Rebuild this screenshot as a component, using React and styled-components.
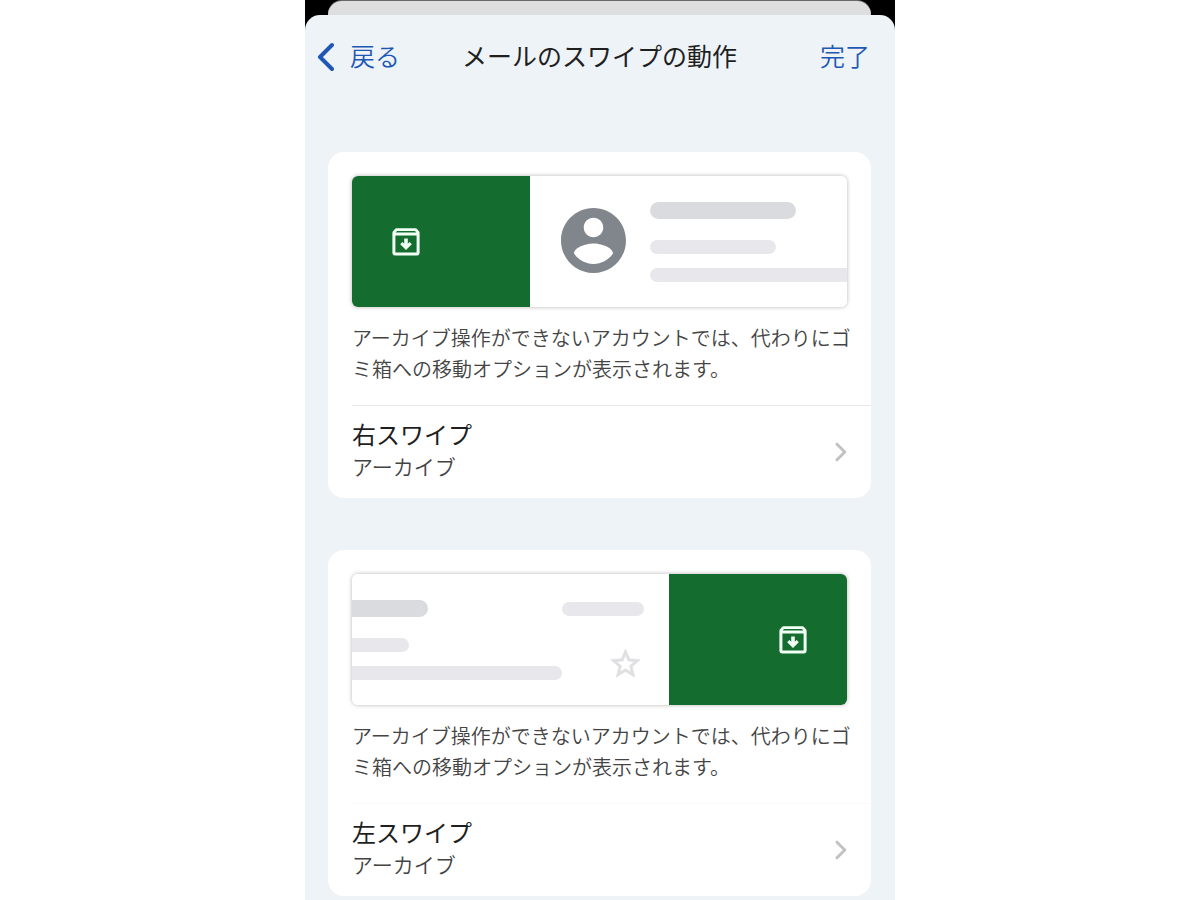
import React from "react";
import styled, { createGlobalStyle } from "styled-components";

const GlobalStyle = createGlobalStyle`
  *, *::before, *::after { box-sizing: border-box; }
  body {
    margin: 0;
    background: #ffffff;
    font-family: "Noto Sans CJK JP", "Noto Sans", sans-serif;
    font-weight: 350;
    color: #1f1f1f;
  }
`;

const Device = styled.div`
  display: flex;
  flex-direction: column;
  width: 100%;
  max-width: 590px;
  min-height: 100vh;
  margin: 0 auto;
  background: #000000;
`;

const SheetBehind = styled.div`
  height: 14px;
  margin: 1px 24px 0 23px;
  border-radius: 14px 14px 0 0;
  background: #dedede;
  box-shadow: 0 -1px 0 #6a6668;
`;

const Sheet = styled.div`
  flex: 1;
  padding-bottom: 4px;
  border-radius: 15px 15px 0 0;
  background: #eef3f8;
`;

const Header = styled.header`
  display: grid;
  grid-template-columns: 1fr auto 1fr;
  align-items: center;
  height: 84px;
  padding: 0 25px 0 12px;
`;

const Title = styled.h1`
  margin: 0 0 4px 12px;
  font-size: 25px;
  line-height: 36px;
  font-weight: 400;
`;

const NavButton = styled.button`
  display: flex;
  align-items: center;
  gap: 16px;
  justify-self: ${(p) => p.$side};
  padding: 0;
  border: 0;
  background: none;
  color: #1f57b5;
  font: inherit;
  font-size: 25px;
  line-height: 36px;
  cursor: pointer;
`;

const NavLabel = styled.span`
  padding-bottom: 4px;
`;

const Sections = styled.main`
  display: flex;
  flex-direction: column;
  gap: 52px;
  padding: 53px 24px 0 23px;
`;

const Card = styled.section`
  overflow: hidden;
  padding: 24px 0 0 24px;
  border-radius: 16px;
  background: #ffffff;
`;

const PreviewFrame = styled.div`
  margin-right: 24px;
  border-radius: 6px;
  box-shadow: 0 0 4px rgba(0, 0, 0, 0.3);
`;

const Preview = styled.div`
  display: flex;
  overflow: hidden;
  height: 131px;
  border-radius: 6px;
  background: #ffffff;
`;

const SwipeArea = styled.div`
  display: flex;
  flex: 0 0 36%;
  align-items: center;
  justify-content: ${(p) => p.$align};
  padding: 0 40px;
  background: #156c2f;
`;

const Message = styled.div`
  display: flex;
  flex: 1;
  justify-content: space-between;
  min-width: 0;
  padding: ${(p) => p.$pad};
`;

const Avatar = styled.svg`
  flex: none;
  width: 65px;
  height: 65px;
  margin: 6px 24px 0 0;
`;

const Lines = styled.div`
  display: flex;
  flex: 1;
  flex-direction: column;
  gap: 14px;
  min-width: 0;
`;

const Bar = styled.span`
  flex: none;
  width: ${(p) => p.$w};
  height: ${(p) => (p.$strong ? 17 : 14)}px;
  margin-bottom: ${(p) => (p.$strong ? 7 : 0)}px;
  border-radius: ${(p) => p.$round};
  background: ${(p) => (p.$strong ? "#dadbdf" : "#e8e8ec")};
`;

const Meta = styled.div`
  display: flex;
  flex: none;
  flex-direction: column;
  align-items: flex-end;
  justify-content: space-between;
  width: 82px;
  padding: 2px 0;

  svg { margin-right: 3px; }
`;

const Note = styled.p`
  margin: 0;
  padding: 15px 16px 21px 0;
  font-size: 20px;
  line-height: 31px;
  color: #444444;
`;

const Row = styled.button`
  display: flex;
  align-items: center;
  justify-content: space-between;
  width: 100%;
  padding: 0 24px 0 0;
  border: 0;
  border-top: 1px solid ${(p) => p.$divider};
  background: none;
  color: inherit;
  font: inherit;
  text-align: left;
  cursor: pointer;
`;

const RowText = styled.span`
  display: flex;
  flex-direction: column;
  padding: 11px 0 15px;
`;

const RowTitle = styled.span`
  font-size: 24px;
  line-height: 33px;
  font-weight: 400;
`;

const RowValue = styled.span`
  font-size: 21px;
  line-height: 33px;
  color: #444444;
`;

const ArchiveIcon = () => (
  <svg width="28" height="28" viewBox="0 0 28 28" aria-hidden="true">
    <path
      fill="#f2fff5"
      fillRule="evenodd"
      d="M4.6 .3h18.8c.7 0 1.2.2 1.6.7l2 2.3c.4.5.6 1.1.6 1.7v19.6a3 3 0 0 1-3 3H3.4a3 3 0 0 1-3-3V5c0-.6.2-1.2.6-1.7L3 1c.4-.5.9-.7 1.6-.7zM5 2.9L3.7 4.4h20.6L23 2.9zM3.4 7.4v17.1h21.2V7.4z"
    />
    <path fill="#f2fff5" d="M12.2 10.4h3.6v5.4l1.8-1.8 2.2 2.2-5.8 5.8-5.800-5.800 2.200-2.200 1.800 1.800z" />
  </svg>
);

const StarIcon = () => (
  <svg width="31" height="30" viewBox="1.5 1.5 21 20" aria-hidden="true">
    <path
      fill="#e0e0e2"
      stroke="#e0e0e2"
      strokeWidth="0.5"
      d="M22 9.24l-7.19-.62L12 2 9.19 8.63 2 9.24l5.46 4.73L5.82 21 12 17.27 18.18 21l-1.63-7.03L22 9.24zM12 15.4l-3.76 2.27 1-4.28-3.32-2.88 4.38-.38L12 6.1l1.71 4.04 4.38.38-3.32 2.88 1 4.28L12 15.4z"
    />
  </svg>
);

const AvatarIcon = () => (
  <Avatar viewBox="2 2 20 20" aria-hidden="true">
    <path
      fill="#80868b"
      d="M12 2C6.48 2 2 6.48 2 12s4.48 10 10 10 10-4.48 10-10S17.52 2 12 2zm0 3c1.66 0 3 1.34 3 3s-1.34 3-3 3-3-1.34-3-3 1.34-3 3-3zm0 14.2c-2.5 0-4.71-1.28-6-3.22.03-1.99 4-3.08 6-3.08 1.99 0 5.97 1.09 6 3.08-1.29 1.94-3.5 3.22-6 3.22z"
    />
  </Avatar>
);

const BackIcon = () => (
  <svg width="17" height="30" viewBox="0 0 17 30" fill="none" aria-hidden="true">
    <path
      d="M15 3L3 15l12 12"
      stroke="#1f57b5"
      strokeWidth="4"
      strokeLinecap="round"
      strokeLinejoin="round"
    />
  </svg>
);

const ForwardIcon = () => (
  <svg width="12" height="20" viewBox="0 0 12 20" fill="none" aria-hidden="true">
    <path
      d="M2 2.2L9.8 10 2 17.8"
      stroke="#c2c2c4"
      strokeWidth="3"
      strokeLinecap="round"
      strokeLinejoin="round"
    />
  </svg>
);

const RightPreview = () => (
  <Preview>
    <SwipeArea $align="flex-start">
      <ArchiveIcon />
    </SwipeArea>
    <Message $pad="26px 0 0 31px">
      <AvatarIcon />
      <Lines>
        <Bar $strong $w="74%" $round="9px" />
        <Bar $w="64%" $round="7px" />
        <Bar $w="100%" $round="7px 0 0 7px" />
      </Lines>
    </Message>
  </Preview>
);

const LeftPreview = () => (
  <Preview>
    <Message $pad="26px 25px 25px 0">
      <Lines>
        <Bar $strong $w="36%" $round="0 9px 9px 0" />
        <Bar $w="27%" $round="0 7px 7px 0" />
        <Bar $w="100%" $round="0 7px 7px 0" />
      </Lines>
      <Meta>
        <Bar $w="100%" $round="7px" />
        <StarIcon />
      </Meta>
    </Message>
    <SwipeArea $align="flex-end">
      <ArchiveIcon />
    </SwipeArea>
  </Preview>
);

const SwipeSetting = ({ preview, title, value, divider }) => (
  <Card>
    <PreviewFrame>{preview}</PreviewFrame>
    <Note>
      アーカイブ操作ができないアカウントでは、代わりにゴミ箱への移動オプションが表示されます。
    </Note>
    <Row type="button" $divider={divider}>
      <RowText>
        <RowTitle>{title}</RowTitle>
        <RowValue>{value}</RowValue>
      </RowText>
      <ForwardIcon />
    </Row>
  </Card>
);

export default function App() {
  return (
    <>
      <GlobalStyle />
      <Device lang="ja">
        <SheetBehind />
        <Sheet>
          <Header>
            <NavButton type="button" $side="start">
              <BackIcon />
              <NavLabel>戻る</NavLabel>
            </NavButton>
            <Title>メールのスワイプの動作</Title>
            <NavButton type="button" $side="end">
              <NavLabel>完了</NavLabel>
            </NavButton>
          </Header>
          <Sections>
            <SwipeSetting
              preview={<RightPreview />}
              title="右スワイプ"
              value="アーカイブ"
              divider="#e8e8e8"
            />
            <SwipeSetting
              preview={<LeftPreview />}
              title="左スワイプ"
              value="アーカイブ"
              divider="#fafafa"
            />
          </Sections>
        </Sheet>
      </Device>
    </>
  );
}
